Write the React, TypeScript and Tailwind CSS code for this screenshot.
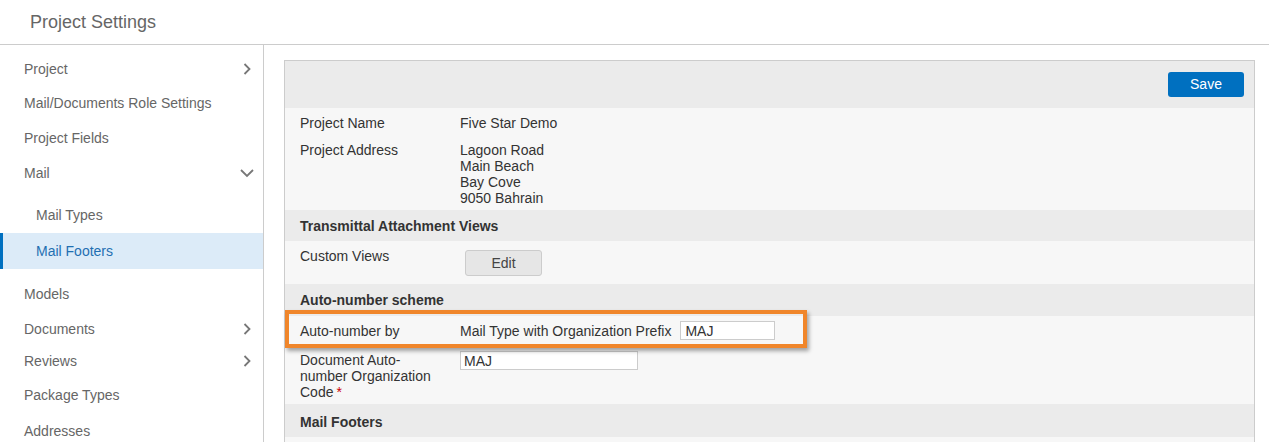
import React from "react";

const font = { fontFamily: '"Liberation Sans", Arial, sans-serif' };

const ChevronRight = () => (
    <svg width="10" height="14" viewBox="0 0 10 14" fill="none">
        <path d="M2.5 2 L7.5 7 L2.5 12" stroke="#777" strokeWidth="1.8" />
    </svg>
);

const ChevronDown = () => (
    <svg width="16" height="10" viewBox="0 0 16 10" fill="none">
        <path d="M2 2 L8 8 L14 2" stroke="#777" strokeWidth="1.8" />
    </svg>
);

interface NavItem {
    label: string,
    h: string,
    sub?: boolean,
    active?: boolean,
    icon?: "right" | "down",
    mt?: string,
}

const navItems: NavItem[] = [
    { label: "Project", h: "h-[34px]", icon: "right" },
    { label: "Mail/Documents Role Settings", h: "h-[35px]" },
    { label: "Project Fields", h: "h-[35px]" },
    { label: "Mail", h: "h-[34px]", icon: "down" },
    { label: "Mail Types", h: "h-[36px]", sub: true, mt: "mt-[7px]" },
    { label: "Mail Footers", h: "h-[36px]", sub: true, active: true },
    { label: "Models", h: "h-[35px]", mt: "mt-[8px]" },
    { label: "Documents", h: "h-[34px]", icon: "right" },
    { label: "Reviews", h: "h-[30px]", icon: "right" },
    { label: "Package Types", h: "h-[38px]" },
    { label: "Addresses", h: "h-[34px]" },
];

const Sidebar = () => (
    <div className="w-[264px] shrink-0 border-r border-[#cccccc] pt-[7px]">
        {navItems.map(item => (
            <div
                key={item.label}
                className={`relative flex items-center justify-between pr-[11px] text-[14px] ${item.h} ${item.mt ?? ""} ${item.sub ? "pl-[36px]" : "pl-[24px]"} ${item.active ? "bg-[#dcebf8] text-[#1f6fb2]" : "text-[#666666]"}`}
            >
                {item.active && <div className="absolute left-0 top-0 h-full w-[3px] bg-[#0070c0]" />}
                <span>{item.label}</span>
                {item.icon === "right" && <ChevronRight />}
                {item.icon === "down" && <span className="-mr-[3px]"><ChevronDown /></span>}
            </div>
        ))}
    </div>
);

const SectionHeader = ({ title, h }: { title: string, h: string }) => (
    <div className={`flex items-center bg-[#ebebeb] pl-[15px] text-[14px] font-bold text-[#333333] ${h}`}>
        {title}
    </div>
);

const App = () => {
    return (
        <div className="h-[442px] w-[1269px] overflow-hidden bg-white text-[#333333]" style={font}>
            <div className="flex h-[45px] items-center border-b border-[#cccccc] pl-[30px] text-[18px] text-[#666666]">
                Project Settings
            </div>
            <div className="flex">
                <Sidebar />
                <div className="flex-1 pl-[20px] pr-[14px] pt-[15px]">
                    <div className="border border-[#cccccc] bg-[#f7f7f7]">
                        <div className="flex h-[47px] items-start justify-end bg-[#ebebeb] pr-[10px] pt-[11px]">
                            <button className="h-[25px] w-[76px] rounded-[3px] bg-[#0070c0] text-[14px] text-white">Save</button>
                        </div>

                        <div className="px-[15px] pb-[4px] pt-[7px] text-[14px] leading-[16px]">
                            <div className="flex">
                                <div className="w-[160px]">Project Name</div>
                                <div>Five Star Demo</div>
                            </div>
                            <div className="mt-[11px] flex">
                                <div className="w-[160px]">Project Address</div>
                                <div>
                                    <div>Lagoon Road</div>
                                    <div>Main Beach</div>
                                    <div>Bay Cove</div>
                                    <div>9050 Bahrain</div>
                                </div>
                            </div>
                        </div>

                        <SectionHeader title="Transmittal Attachment Views" h="h-[31px] pt-[2px]" />
                        <div className="flex h-[43px] px-[15px] pt-[7px] text-[14px] leading-[16px]">
                            <div className="w-[165px]">Custom Views</div>
                            <button className="mt-[2px] h-[26px] w-[77px] rounded-[3px] border border-[#cccccc] bg-[#e6e6e6] text-[14px] text-[#444444]">Edit</button>
                        </div>

                        <SectionHeader title="Auto-number scheme" h="h-[32px]" />
                        <div className="relative flex h-[29px] items-center px-[15px] text-[14px] leading-[16px]">
                            <div className="w-[160px]">Auto-number by</div>
                            <div className="flex items-center">
                                <span>Mail Type with Organization Prefix</span>
                                <input
                                    readOnly
                                    value="MAJ"
                                    className="ml-[9px] h-[19px] w-[95px] border border-[#cccccc] bg-white px-[4px] text-[14px] text-[#333333] outline-none"
                                />
                            </div>
                            <div className="pointer-events-none absolute left-0 top-[-6px] h-[38px] w-[522px] border-[4px] border-[#f0862b] shadow-[2px_3px_4px_rgba(0,0,0,0.35)]" />
                        </div>
                        <div className="flex h-[59px] px-[15px] pt-[7px] text-[14px] leading-[16px]">
                            <div className="w-[160px]">
                                <div className="w-[142px]">
                                    Document Auto-number Organization Code<span className="ml-[3px] align-top text-[#cc0000]">*</span>
                                </div>
                            </div>
                            <input
                                readOnly
                                value="MAJ"
                                className="-mt-[1px] h-[19px] w-[178px] border border-[#cccccc] bg-white px-[3px] text-[14px] text-[#333333] outline-none"
                            />
                        </div>

                        <SectionHeader title="Mail Footers" h="h-[33px] pt-[3px]" />
                        <div className="h-[40px]" />
                    </div>
                </div>
            </div>
        </div>
    );
};

export default App;
